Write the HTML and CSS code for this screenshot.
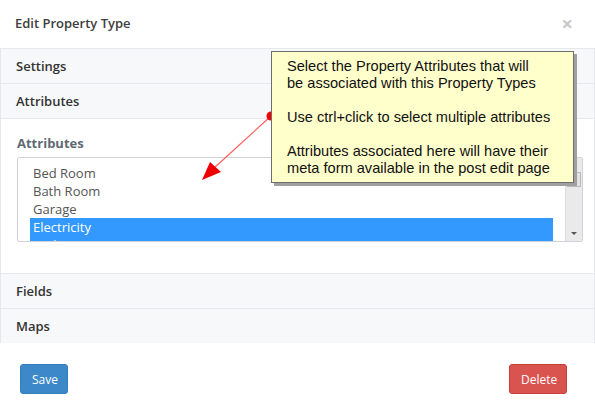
FILE: index.html
```html
<!DOCTYPE html>
<html>
<head>
<meta charset="utf-8">
<link rel="stylesheet" href="styles.css">
</head>
<body>
<div class="modal">
  <div class="modal-header">
    <h4 class="modal-title">Edit Property Type</h4>
    <span class="close">&times;</span>
  </div>
  <div class="panel"><div class="panel-heading">Settings</div></div>
  <div class="panel open">
    <div class="panel-heading">Attributes</div>
    <div class="panel-body">
      <label class="field-label">Attributes</label>
      <div class="listbox">
        <div class="options">
          <div class="opt">Bed Room</div>
          <div class="opt">Bath Room</div>
          <div class="opt">Garage</div>
          <div class="opt sel">Electricity</div>
          <div class="opt sel">Parking</div>
        </div>
        <div class="scrollbar">
          <span class="arrow up"></span>
          <span class="thumb"></span>
          <span class="arrow down"></span>
        </div>
      </div>
    </div>
  </div>
  <div class="panel"><div class="panel-heading">Fields</div></div>
  <div class="panel"><div class="panel-heading">Maps</div></div>
  <div class="modal-footer">
    <button class="btn btn-primary">Save</button>
    <button class="btn btn-danger">Delete</button>
  </div>

  <svg class="pointer" width="595" height="414" viewBox="0 0 595 414">
    <line x1="271" y1="116" x2="213" y2="169" stroke="#ff5a5a" stroke-width="1.2"/>
    <polygon points="202,180 210,162 221,172" fill="#ee0000"/>
    <circle cx="271" cy="116" r="4.5" fill="#ee0000"/>
  </svg>
  <div class="tooltip">
    <p>Select the Property Attributes that will<br>be associated with this Property Types</p>
    <p>Use ctrl+click to select multiple attributes</p>
    <p>Attributes associated here will have their<br>meta form available in the post edit page</p>
  </div>
</div>
</body>
</html>
```
FILE: styles.css
```css
html, body {
  margin: 0;
  padding: 0;
  background: #fff;
}
.modal {
  position: relative;
  width: 595px;
  height: 414px;
  font-family: "Open Sans", "Liberation Sans", sans-serif;
  font-size: 13px;
  color: #333;
  overflow: hidden;
}
.modal-header {
  height: 48px;
  display: flex;
  align-items: center;
  justify-content: space-between;
  padding: 0 22px 2px 15px;
  box-sizing: border-box;
}
.modal-title {
  margin: 0;
  font-size: 13px;
  font-weight: 600;
  color: #3d3d3d;
}
.close {
  font-size: 20px;
  font-weight: 700;
  color: #c8c8c8;
  line-height: 1;
  margin-top: 1px;
}
.panel {
  border: 1px solid #e6e8eb;
  border-bottom: none;
  background: #fff;
}
.panel:last-of-type {
  border-bottom: 1px solid #e6e8eb;
}
.panel-heading {
  height: 34px;
  display: flex;
  align-items: center;
  padding: 0 15px;
  background: #f7f8fa;
  font-weight: 600;
  color: #333;
}
.open .panel-heading {
  border-bottom: 1px solid #e6e8eb;
}
.panel-body {
  height: 154px;
  box-sizing: border-box;
  padding: 16px 11px 0 16px;
}
.field-label {
  display: block;
  font-weight: 700;
  color: #606a73;
  height: 22px;
  line-height: 16px;
  margin-bottom: 0;
}
.listbox {
  display: flex;
  height: 85px;
  box-sizing: border-box;
  border: 1px solid #cfd3d7;
  border-radius: 2px;
  overflow: hidden;
}
.options {
  flex: 1;
  padding: 6px 12px 0 12px;
  overflow: hidden;
}
.opt {
  height: 18px;
  line-height: 18px;
  padding-left: 3px;
  color: #555;
}
.opt.sel {
  background: #3399ff;
  color: #fff;
}
.scrollbar {
  width: 16px;
  background: #eaeaea;
  border-left: 1px solid #dcdcdc;
  display: flex;
  flex-direction: column;
  align-items: center;
  position: relative;
}
.arrow {
  width: 0;
  height: 0;
  border-left: 3px solid transparent;
  border-right: 3px solid transparent;
}
.arrow.up {
  border-bottom: 3px solid #777;
  margin-top: 5px;
}
.arrow.down {
  border-top: 3px solid #555;
  margin-top: auto;
  margin-bottom: 6px;
}
.thumb {
  width: 14px;
  height: 15px;
  margin-top: 6px;
  background: #e2e2e2;
  border: 1px solid #b9b9b9;
  box-sizing: border-box;
}
.modal-footer {
  display: flex;
  justify-content: space-between;
  padding: 21px 28px 0 20px;
}
.btn {
  height: 30px;
  border-radius: 3px;
  font-family: "Open Sans", "Liberation Sans", sans-serif;
  font-size: 12px;
  color: #fff;
  padding: 0 11px;
  cursor: pointer;
}
.btn-primary {
  background: #3c88c9;
  border: 1px solid #357ebd;
  width: 48px;
}
.btn-danger {
  background: #d9534f;
  border: 1px solid #c9403b;
  width: 58px;
}
.pointer {
  position: absolute;
  left: 0;
  top: 0;
  pointer-events: none;
}
.tooltip {
  position: absolute;
  left: 271px;
  top: 51px;
  width: 303px;
  height: 132px;
  box-sizing: border-box;
  background: #ffffcc;
  border: 1px solid #6e6e6e;
  box-shadow: 3px 3px 0 #a0a0a0;
  padding: 6px 8px 0 15px;
  font-family: "Liberation Sans", Arial, sans-serif;
  font-size: 14.6px;
  line-height: 17px;
  color: #111;
  white-space: nowrap;
}
.tooltip p {
  margin: 0 0 17px 0;
}
```
